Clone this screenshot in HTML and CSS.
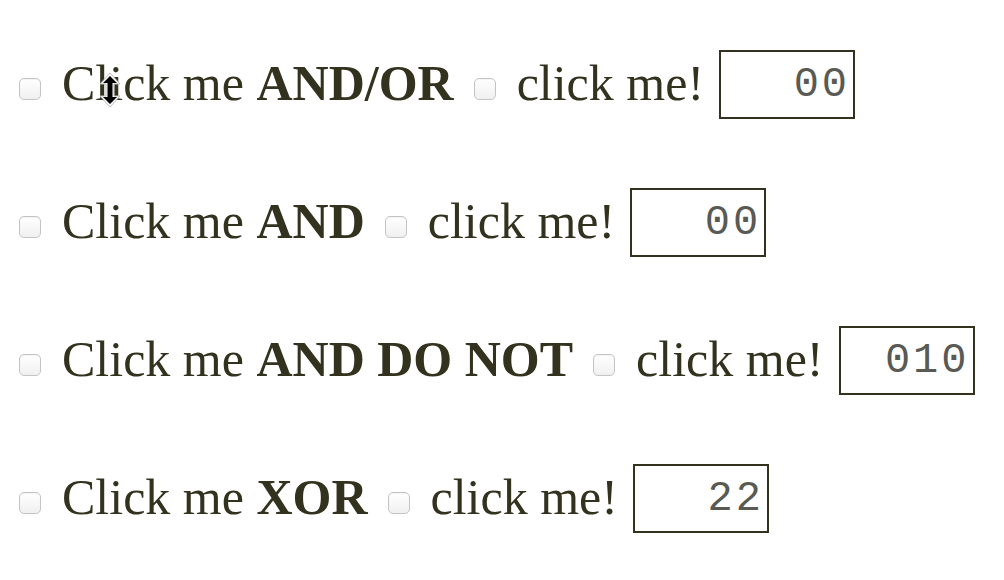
FILE: index.html
```html
<!DOCTYPE html>
<html>
<head>
<meta charset="utf-8">
<link rel="stylesheet" href="styles.css">
</head>
<body>
<div class="list">
  <div class="row">
    <input type="checkbox" class="cb first">
    <span class="label">Click me <b>AND/OR</b></span>
    <input type="checkbox" class="cb second">
    <span class="label">click me!</span>
    <input type="text" class="out" value="00">
  </div>
  <div class="row">
    <input type="checkbox" class="cb first">
    <span class="label">Click me <b>AND</b></span>
    <input type="checkbox" class="cb second">
    <span class="label">click me!</span>
    <input type="text" class="out" value="00">
  </div>
  <div class="row">
    <input type="checkbox" class="cb first">
    <span class="label">Click me <b>AND DO NOT</b></span>
    <input type="checkbox" class="cb second">
    <span class="label">click me!</span>
    <input type="text" class="out" value="010">
  </div>
  <div class="row">
    <input type="checkbox" class="cb first">
    <span class="label">Click me <b>XOR</b></span>
    <input type="checkbox" class="cb second">
    <span class="label">click me!</span>
    <input type="text" class="out" value="22">
  </div>
</div>
<svg class="cursor" width="24" height="36" viewBox="0 0 24 36">
  <path d="M12 1 L22 12 L16 12 L16 24 L22 24 L12 35 L2 24 L8 24 L8 12 L2 12 Z" fill="#fff" stroke="#bbb" stroke-width="1"/>
  <path d="M12 4 L19 11 L14.5 11 L14.5 25 L19 25 L12 32 L5 25 L9.5 25 L9.5 11 L5 11 Z" fill="#000"/>
</svg>
</body>
</html>
```

FILE: styles.css
```css
html, body {
  margin: 0;
  padding: 0;
  background: #ffffff;
}
body {
  font-family: "Liberation Serif", "Times New Roman", serif;
  color: #33321f;
  font-size: 50px;
  position: relative;
}
.list {
  display: flex;
  flex-direction: column;
  gap: 69px;
  padding-top: 50px;
}
.row {
  display: flex;
  align-items: center;
  height: 69px;
  white-space: nowrap;
}
.cb {
  -webkit-appearance: none;
  appearance: none;
  width: 22px;
  height: 22px;
  margin: 9px 0 0 0;
  border: 1px solid #c4c4c4;
  border-radius: 5px;
  background: linear-gradient(#ffffff, #f0f0f0);
  box-shadow: inset 0 1px 1px rgba(0,0,0,0.05);
  flex: none;
}
.cb.first { margin-left: 19px; margin-right: 21px; }
.cb.second { margin-left: 20px; margin-right: 21px; }
.label {
  line-height: 1;
  margin-top: -4px;
}
.label b { font-weight: bold; }
.out {
  box-sizing: border-box;
  width: 136px;
  height: 69px;
  margin-left: 15px;
  border: 2px solid #33321f;
  padding: 0 3px 0 0;
  text-align: right;
  font-family: "Liberation Mono", "Courier New", monospace;
  font-size: 42px;
  letter-spacing: 3px;
  color: #5a5a54;
  background: #fff;
  outline: none;
  flex: none;
}
.cursor {
  position: absolute;
  left: 98px;
  top: 72px;
}
```
